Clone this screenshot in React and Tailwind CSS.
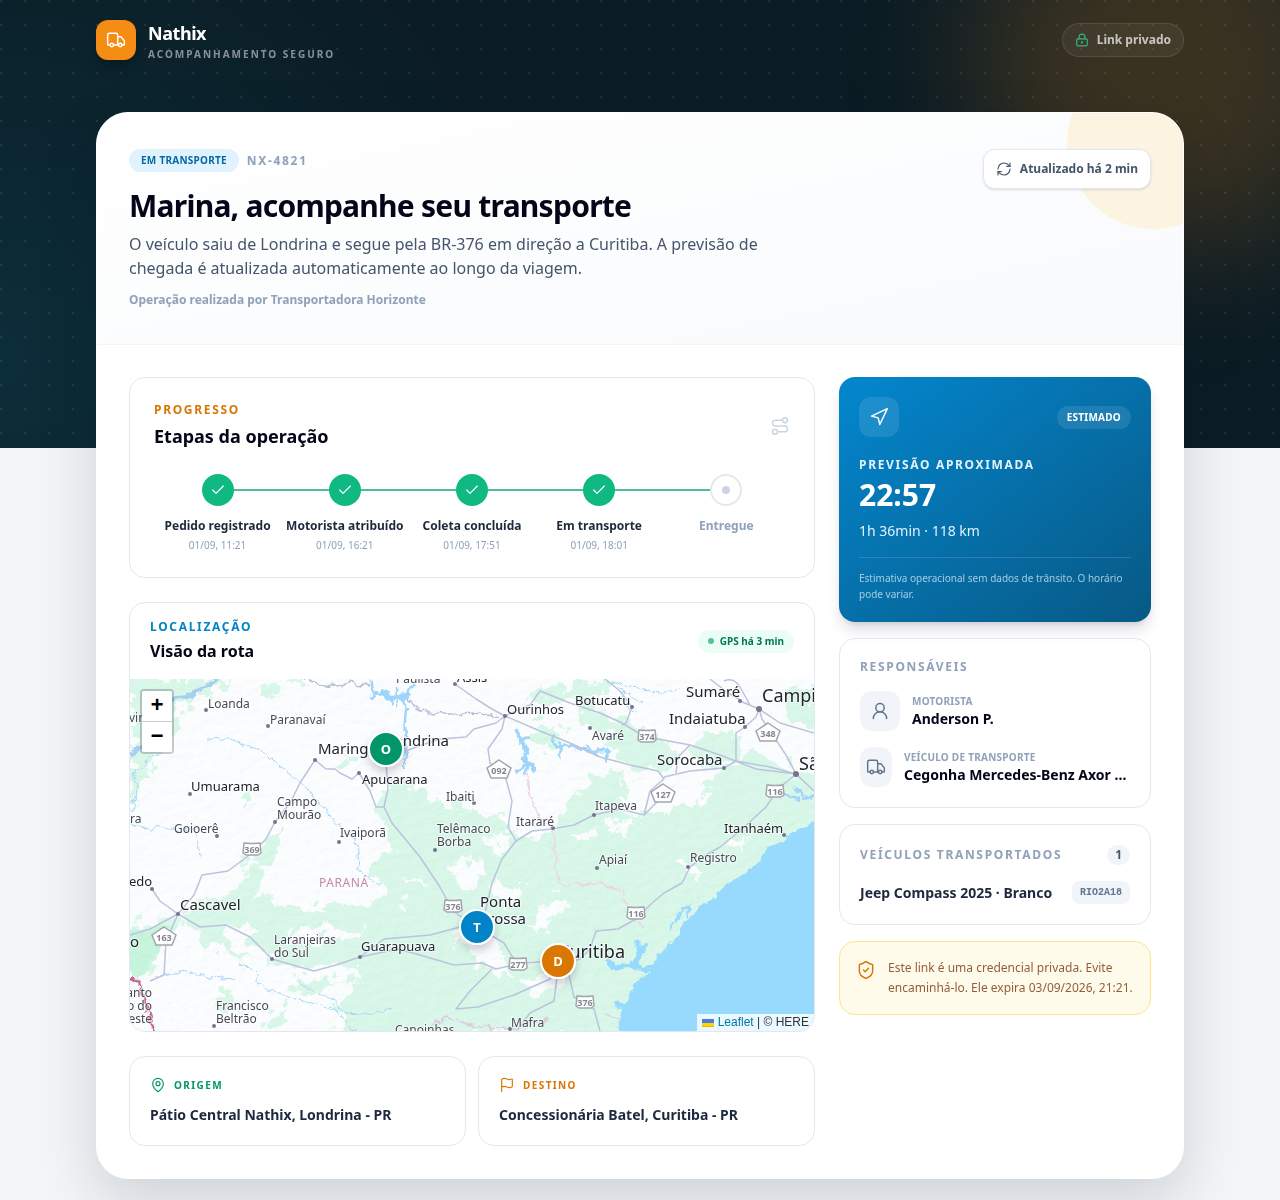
import { Check, Flag, LockKeyhole, MapPin, Navigation, RefreshCw, Route, ShieldCheck, Truck, UserRound } from 'lucide-react';

const steps = [
    { label: 'Pedido registrado', date: '01/09, 11:21', done: true },
    { label: 'Motorista atribuído', date: '01/09, 16:21', done: true },
    { label: 'Coleta concluída', date: '01/09, 17:51', done: true },
    { label: 'Em transporte', date: '01/09, 18:01', done: true },
    { label: 'Entregue', done: false },
];

// [x, baseline, font size, lines, anchor]
const cities = [
    [-1, 43, 12, ['vir']],
    [78, 29, 12, ['Loanda']],
    [140, 45, 12, ['Paranavaí']],
    [188, 75, 15, ['Maringá']],
    [319, 67, 15, ['Londrina'], 'end'],
    [232, 105, 13, ['Apucarana']],
    [61, 112, 13, ['Umuarama']],
    [147, 127, 12, ['Campo', 'Mourão']],
    [316, 122, 12, ['Ibaiti']],
    [0, 144, 12, ['ra']],
    [266, 4, 12, ['Paulista']],
    [327, 3, 13, ['Assis']],
    [44, 154, 12, ['Goioerê']],
    [210, 158, 12, ['Ivaiporã']],
    [307, 154, 12, ['Telêmaco', 'Borba']],
    [386, 147, 12, ['Itararé']],
    [377, 35, 13, ['Ourinhos']],
    [445, 26, 13, ['Botucatu']],
    [462, 61, 12, ['Avaré']],
    [556, 18, 15, ['Sumaré']],
    [539, 45, 15, ['Indaiatuba']],
    [632, 23, 18, ['Campinas']],
    [527, 86, 15, ['Sorocaba']],
    [669, 91, 18, ['São Paulo']],
    [465, 131, 12, ['Itapeva']],
    [594, 154, 13, ['Itanhaém']],
    [560, 183, 12, ['Registro']],
    [469, 185, 12, ['Apiaí']],
    [-1, 207, 13, ['edo']],
    [50, 231, 15, ['Cascavel']],
    [0, 268, 15, ['o']],
    [144, 265, 12, ['Laranjeiras', 'do Sul']],
    [231, 272, 13, ['Guarapuava']],
    [22, 318, 12, ['anto', 'o do', 'este'], 'end'],
    [86, 331, 12, ['Francisco', 'Beltrão']],
    [265, 355, 12, ['Canoinhas']],
    [381, 348, 12, ['Mafra']],
    [350, 228, 15, ['Ponta']],
    [396, 245, 15, ['Grossa'], 'end'],
    [495, 279, 18, ['Curitiba'], 'end'],
];

const dots = [
    [76, 31], [138, 47], [185, 81], [229, 94], [60, 115], [145, 143], [344, 124], [325, 5], [87, 157], [209, 163],
    [305, 171], [423, 149], [375, 37], [502, 28], [460, 49], [610, 22], [615, 48], [594, 89], [464, 136], [654, 156],
    [558, 188], [467, 189], [22, 210], [48, 235], [142, 280], [230, 278], [84, 347], [380, 350], [629, 30, 3], [666, 95, 3],
];

const shields = [[517, 57, '374'], [645, 112, '116'], [323, 227, '376'], [388, 285, '277'], [455, 323, '376'], [506, 234, '116'], [122, 170, '369']];
const stateShields = [[638, 54, '348'], [369, 91, '092'], [533, 115, '127'], [34, 258, '163']];

const pins = [
    { x: 256, y: 70, letter: 'O', color: '#059669' },
    { x: 347, y: 248, letter: 'T', color: '#0284c7' },
    { x: 428, y: 282, letter: 'D', color: '#d97706' },
];

const greens = [
    '0,0 108,0 84,12 60,22 44,36 50,52 36,66 24,84 12,104 0,130',
    '0,250 20,246 46,236 52,246 38,262 26,280 18,296 0,300',
    // southern plateau and the coast range
    '262,104 280,97 292,112 306,127 333,124 350,134 372,136 384,152 400,160 420,152 436,128 450,110 466,98 496,94 500,110 486,122 500,134 530,136 556,124 574,104 600,88 622,72 650,84 690,104 690,356 204,356 222,338 198,322 168,312 140,298 112,282 84,268 60,252 54,240 70,222 92,218 112,206 118,196 112,180 128,186 138,200 126,214 150,226 178,232 200,222 232,226 262,218 246,200 240,184 262,172 256,150 246,132 250,116',
    '128,168 146,152 152,164 146,180 134,196 124,190',
    '400,14 440,8 462,0 480,4 470,18 436,22 410,26',
    '488,36 516,48 540,66 546,82 530,96 506,92 490,76 480,60',
    '398,50 420,44 432,56 424,72 402,66',
    '446,20 470,28 484,46 496,62 470,56 452,44',
    '560,70 592,50 616,62 600,82 572,90',
    '648,14 684,6 690,44 664,46',
    '108,118 124,114 124,128 112,132',
    '132,8 142,6 146,16 138,18',
    '208,82 220,74 222,88 212,92',
    '84,316 108,312 104,334 90,328', '140,330 156,326 158,344 142,352 134,344',
    '148,0 176,0 172,5 160,5',
];

const clearings = [
    '130,190 160,178 190,176 232,184 246,206 236,218 206,214 184,224 160,216 142,214',
    '92,250 118,246 124,262 112,272 96,264', '160,256 196,246 232,252 230,262 200,258 176,266',
    '104,268 130,266 142,284 168,290 202,288 226,286 236,294 214,302 180,300 150,304 128,292',
    '184,316 206,302 226,304 222,318 200,324 188,326',
    '320,186 340,180 352,196 346,208 330,206', '372,204 394,206 390,222 376,224 362,218',
    '408,232 420,218 434,214 436,226 420,240 412,256 404,250',
    '322,250 342,244 362,260 378,286 386,292 366,296 346,278 330,266',
    '396,306 426,290 440,292 430,306 402,316', '476,146 500,138 512,144 492,154', '440,156 456,150 470,158 450,164',
    '356,150 376,148 384,170 372,176 360,164', '546,178 556,180 566,200 556,196', '600,158 620,156 612,170 602,168',
    '268,220 280,222 276,234 266,230', '270,196 290,200 280,206', '560,110 580,116 570,128 556,124',
];

const roads = [
    'M190 -1 L235 -1 M325 5 L346 20 L362 30 L375 37 L400 26 L410 12 L440 24 L470 34 L492 44 L510 55 L528 60 L560 66 L590 76 L626 90 L666 95',
    'M502 28 L496 44 L492 46 M475 0 L490 12 L502 28',
    'M375 37 L410 52 L440 64 L470 78 L500 86 L528 92 L534 100 L520 112 L514 136 M534 98 L560 92 L594 89 L606 82 L640 88 L666 95',
    'M560 66 L548 78 L546 94 M606 82 L606 54 L615 48 L626 38 L629 30 L632 40 L644 58 L656 76 L666 95 L684 112',
    'M610 22 L629 30 L650 44 L684 54 M580 0 L598 14 L612 22 M594 2 Q604 -2 610 8 L620 26',
    'M666 95 L648 110 L636 128 L610 152 L590 168 L576 176 L560 188 L552 204 L534 214 L520 226 L506 240 L488 250 L466 252 L460 270 L450 280 L436 284',
    'M375 37 L366 44 L344 50 L336 58 L310 60 L286 68 L256 80 M375 37 L372 50 L358 70 L360 84 L376 100 L382 122 L378 148 L386 162 L372 180 L362 204 L356 230 L348 246',
    'M386 162 L402 152 L422 150 L444 146 L464 136 L490 130 L514 136 L530 120',
    'M229 94 L222 100 L210 94 L205 90 L196 90 L185 81 L170 104 L160 124 L145 143 L136 160 L122 174 L98 192 L72 196 L64 216 L48 235',
    'M22 210 L30 222 L48 235 L70 248 L96 246 L120 258 L142 280 L184 292 L206 286 L230 278 L254 260 L300 256 L330 248 L347 248',
    'M48 235 L20 250 L0 256 M48 235 L36 262 L34 296 L20 302',
    'M229 94 L240 112 L246 128 L254 128 L258 110 L256 84 M254 128 L262 144 L290 178 L310 208 L323 232 L340 244',
    'M230 278 L268 270 L290 276 L324 286 L352 284 L366 290 L392 284 L428 282 M347 248 L374 264 L386 284',
    'M428 282 L420 300 L384 316 L348 328 L326 330 L340 312 L362 290 M428 290 L424 322 L400 334 L388 350 M438 292 L444 318 L464 330 L470 352',
];

const rivers = [
    'M0 142 L12 150 L34 148 L50 152 L66 148 L70 178 M76 61 L100 60 L132 72 L150 88 L172 104 L204 142 L226 160 L228 192 L250 206',
    'M0 134 L8 110 L4 92 L40 66 M26 298 L50 292 L80 298 L104 300 M228 356 L210 334 L190 326 L164 320 L144 312 L128 304 L124 292 L110 284',
    'M168 304 L200 320 L216 334 L240 336 L262 328 M478 0 L500 8 L530 14 L550 10 M486 8 L510 22 M492 18 L506 36',
];

const Eyebrow = ({ className, children }) => <p className={`text-xs font-bold uppercase tracking-[0.14em] ${className}`}>{children}</p>;

const RouteMap = () => (
    <svg viewBox="0 0 684 352" preserveAspectRatio="xMidYMid slice" className="block h-full w-full" role="img" aria-label="Mapa da rota">
        <defs>
            <filter id="ragged" x="-5%" y="-5%" width="110%" height="110%">
                <feTurbulence type="fractalNoise" baseFrequency="0.07" numOctaves="4" seed="4" result="n" />
                <feDisplacementMap in="SourceGraphic" in2="n" scale="30" xChannelSelector="R" yChannelSelector="G" />
            </filter>
            <filter id="wiggle" x="-5%" y="-5%" width="110%" height="110%">
                <feTurbulence type="fractalNoise" baseFrequency="0.12" numOctaves="3" seed="9" result="n" />
                <feDisplacementMap in="SourceGraphic" in2="n" scale="9" xChannelSelector="R" yChannelSelector="G" />
            </filter>
            <filter id="relief" x="0" y="0" width="100%" height="100%">
                <feTurbulence type="fractalNoise" baseFrequency="0.09 0.14" numOctaves="4" seed="12" result="n" />
                <feDiffuseLighting in="n" surfaceScale="2" lightingColor="#ffffff">
                    <feDistantLight azimuth="225" elevation="60" />
                </feDiffuseLighting>
            </filter>
            <filter id="pinShadow" x="-50%" y="-50%" width="200%" height="200%">
                <feDropShadow dx="0" dy="5" stdDeviation="5" floodColor="#0f172a" floodOpacity="0.2" />
            </filter>
        </defs>
        <rect width="684" height="352" fill="#fcfdff" />
        <g filter="url(#ragged)">
            <g fill="#daf8ea">{greens.map((p) => <polygon key={p} points={p} />)}</g>
            <g fill="#fcfdff">{clearings.map((p) => <polygon key={p} points={p} />)}</g>
        </g>
        <polygon points="0,252 40,246 30,270 16,294 0,298" fill="#c8f5de" filter="url(#wiggle)" />
        <rect width="684" height="352" filter="url(#relief)" opacity="0.09" className="mix-blend-multiply" />
        <g filter="url(#wiggle)" fill="none" strokeLinejoin="round">
            <g stroke="#a3d5f8" strokeWidth="1">{rivers.map((d) => <path key={d} d={d} />)}</g>
            <path d="M0 76 L24 60 M38 22 L62 16 L78 6 L90 -2" stroke="#a6cff2" strokeWidth="4" />
            <path d="M174 0 L200 8 L222 4 L240 8 M240 0 L244 14 L262 20 L276 18 L290 32 L320 36 L344 34 L370 38" stroke="#b9bdd6" strokeWidth="1.5" />
            <path d="M240 2 L244 12 L242 20 M244 12 L258 18 L262 26 M258 18 L272 18 L284 6 M272 18 L276 30 L274 56 M266 8 L268 28 M276 56 L274 90" stroke="#9fd5fa" strokeWidth="2.5" />
            <path d="M250 10 L258 18 L272 20 L280 12" stroke="#9fd5fa" strokeWidth="5" />
            <path d="M386 52 L394 66 L398 80 L396 96 M388 62 L400 60 M392 78 L404 90 M396 84 L386 94" stroke="#9fd5fa" strokeWidth="4" />
            <path d="M422 54 L426 68 L440 66 L456 72 L478 72 L476 84 M430 62 L428 78 M456 66 L468 78" stroke="#9fd5fa" strokeWidth="3" />
            <path d="M664 108 L672 118 L688 116 M640 110 L668 120" stroke="#9fd5fa" strokeWidth="2.5" />
            <path d="M0 300 L10 304 L14 318 L18 334 L24 354" stroke="#c8688c" strokeWidth="2.5" />
            <path d="M398 96 L400 120 L410 140 L424 150 L426 190 L432 206 L470 204 L494 212 L498 236 L514 250 M400 120 L396 100" stroke="#efd3df" strokeWidth="1.5" />
            <path d="M300 346 L316 338 L340 346 L380 350 L420 340 M474 336 L490 338" stroke="#dccbdd" strokeWidth="1.5" />
        </g>
        <g fill="none" stroke="#bcc3dd" strokeWidth="1.5" strokeLinejoin="round">{roads.map((d) => <path key={d} d={d} />)}</g>
        <g filter="url(#wiggle)">
            <path d="M692 138 L658 157 L636 170 L630 184 L612 196 L597 206 L572 226 L556 242 L548 256 L534 272 L524 282 L520 294 L504 306 L494 324 L489 340 L488 362 L700 362 Z" fill="#97dafd" />
            <path d="M512 290 L502 286 L484 288 L478 280 M504 286 L510 272 L506 262 M510 276 L518 264 M512 292 L524 288 M486 326 L500 327" fill="none" stroke="#97dafd" strokeWidth="5" />
            <path d="M546 244 L552 230 L560 226 L556 240 M540 250 L548 234" fill="none" stroke="#97dafd" strokeWidth="2" />
        </g>
        <g fill="#77748f">{dots.map(([x, y, r = 2]) => <circle key={`${x}-${y}`} cx={x} cy={y} r={r} />)}</g>
        <g fill="#ffffff" stroke="#a3a5ad" strokeWidth="1.5">
            {shields.map(([x, y]) => <path key={`${x}-${y}`} d={`M${x - 8} ${y - 6} Q${x} ${y - 5} ${x + 8} ${y - 6} L${x + 9} ${y + 4} L${x + 6} ${y + 6} H${x - 6} L${x - 9} ${y + 4} Z`} />)}
            {stateShields.map(([x, y]) => <path key={`${x}-${y}`} d={`M${x} ${y - 10} L${x + 12} ${y - 2} L${x + 8} ${y + 8} H${x - 8} L${x - 12} ${y - 2} Z`} />)}
        </g>
        <g fontSize="9" fontWeight="700" fill="#85878f" textAnchor="middle">
            {[...shields, ...stateShields].map(([x, y, n]) => <text key={`${x}-${y}`} x={x} y={y + 4}>{n}</text>)}
        </g>
        <g stroke="#ffffff" strokeOpacity="0.6" strokeWidth="2" paintOrder="stroke">
            {cities.map(([x, y, size, lines, anchor = 'start']) => (
                <text key={lines[0]} fontSize={size} textAnchor={anchor} fill={size > 12 ? '#22232b' : '#484955'}>
                    {lines.map((line, i) => <tspan key={line} x={x} y={y + i * 13}>{line}</tspan>)}
                </text>
            ))}
        </g>
        <text x="189" y="208" fontSize="12" fill="#c58aa6" className="tracking-wider">PARANÁ</text>
        {pins.map((pin) => (
            <g key={pin.letter}>
                <circle cx={pin.x} cy={pin.y} r="17" fill={pin.color} stroke="#ffffff" strokeWidth="2" filter="url(#pinShadow)" />
                <text x={pin.x} y={pin.y + 5} fontSize="13" fontWeight="700" fill="#ffffff" textAnchor="middle">{pin.letter}</text>
            </g>
        ))}
    </svg>
);

export default function App() {
    return (
        <div className="relative min-h-screen overflow-hidden bg-[#f3f6f8] pb-5 font-['Noto_Sans',sans-serif] text-slate-950">
            <div className="absolute inset-x-0 top-0 h-112 overflow-hidden bg-[#0b1c24]">
                <div className="absolute inset-0 bg-[radial-gradient(circle_at_0%_80%,rgba(14,116,144,0.2),transparent_40%)]" />
                <div className="absolute -right-20 -top-32 size-96 rounded-full bg-[#f58d15]/20 blur-3xl" />
                <div className="absolute inset-0 bg-[radial-gradient(circle_at_1px_1px,rgba(255,255,255,0.09)_1px,transparent_0)] bg-[size:24px_24px]" />
            </div>

            <div className="relative mx-auto max-w-6xl px-8">
                <header className="flex h-20 items-center justify-between">
                    <div className="flex items-center gap-3">
                        <div className="flex size-10 items-center justify-center rounded-xl bg-[#f58d15] text-white shadow-lg shadow-black/20">
                            <Truck size={20} strokeWidth={1.75} />
                        </div>
                        <div>
                            <p className="text-lg font-bold tracking-tight text-white">Nathix</p>
                            <p className="text-[10px] leading-[15px] font-bold uppercase tracking-[0.2em] text-white/50">Acompanhamento seguro</p>
                        </div>
                    </div>
                    <div className="flex items-center gap-2 rounded-full border border-white/10 bg-white/5 px-3 py-2 text-xs font-bold text-white/70">
                        <LockKeyhole size={14} className="text-[#34b57f]" />
                        Link privado
                    </div>
                </header>

                <main className="mt-8 overflow-hidden rounded-[32px] border border-white bg-white shadow-[0_24px_60px_rgba(15,23,42,0.16)]">
                    <section className="relative overflow-hidden border-b border-slate-100 bg-linear-to-br from-white to-slate-50 px-8 py-9">
                        <div className="absolute -right-14 -top-14 size-43 rounded-full bg-[#fdf3e1]" />
                        <div className="relative flex items-start justify-between gap-6">
                            <div>
                                <div className="flex items-center gap-2">
                                    <span className="rounded-full bg-[#e0f2fe] px-3 py-1 text-[10px] leading-[15px] font-bold uppercase tracking-wide text-[#0369a1]">Em transporte</span>
                                    <span className="text-xs font-bold tracking-[0.14em] text-slate-400">NX-4821</span>
                                </div>
                                <h1 className="mt-4 text-3xl font-bold tracking-tight">Marina, acompanhe seu transporte</h1>
                                <p className="mt-2 max-w-2xl text-base text-slate-600">O veículo saiu de Londrina e segue pela BR-376 em direção a Curitiba. A previsão de chegada é atualizada automaticamente ao longo da viagem.</p>
                                <p className="mt-3 text-xs font-bold text-slate-400">Operação realizada por Transportadora Horizonte</p>
                            </div>
                            <button type="button" className="flex h-10 shrink-0 items-center gap-2 rounded-xl border border-slate-200 bg-white px-3 text-xs font-bold text-slate-600 shadow-sm">
                                <RefreshCw size={16} strokeWidth={1.75} />
                                Atualizado há 2 min
                            </button>
                        </div>
                    </section>

                    <div className="grid grid-cols-[minmax(0,1fr)_312px] items-start gap-6 p-8">
                        <div className="space-y-6">
                            <section className="rounded-2xl border border-slate-200 bg-white p-6">
                                <div className="flex items-center justify-between">
                                    <div>
                                        <Eyebrow className="text-[#d97706]">Progresso</Eyebrow>
                                        <h2 className="mt-1 text-lg font-bold">Etapas da operação</h2>
                                    </div>
                                    <Route size={20} strokeWidth={1.75} className="text-slate-300" />
                                </div>
                                <ol className="mt-6 grid grid-cols-5">
                                    {steps.map((step, i) => (
                                        <li key={step.label} className="flex flex-col items-center text-center">
                                            <div className="flex w-full items-center">
                                                <span className={`h-0.5 flex-1 ${i > 0 ? 'bg-[#56b99c]' : ''}`} />
                                                <span className={`flex size-8 items-center justify-center rounded-full ${step.done ? 'bg-[#10b981] text-white' : 'border-2 border-slate-200 bg-white'}`}>
                                                    {step.done ? <Check size={16} strokeWidth={1.75} /> : <span className="size-2 rounded-full bg-slate-300" />}
                                                </span>
                                                <span className={`h-0.5 flex-1 ${i < steps.length - 1 ? 'bg-[#56b99c]' : ''}`} />
                                            </div>
                                            <p className={`mt-3 whitespace-nowrap text-xs font-bold ${step.done ? 'text-slate-800' : 'text-slate-400'}`}>{step.label}</p>
                                            {step.date && <p className="mt-1 text-[10px] leading-[15px] text-slate-400">{step.date}</p>}
                                        </li>
                                    ))}
                                </ol>
                            </section>

                            <section className="overflow-hidden rounded-2xl border border-slate-200 bg-white">
                                <div className="flex items-center justify-between px-5 py-4">
                                    <div>
                                        <Eyebrow className="text-[#0284c7]">Localização</Eyebrow>
                                        <h2 className="mt-1 text-base font-bold">Visão da rota</h2>
                                    </div>
                                    <span className="flex items-center gap-1.5 rounded-full bg-emerald-50 px-2.5 py-1 text-[10px] leading-[15px] font-bold text-[#047857]">
                                        <span className="size-1.5 rounded-full bg-[#4cc79a]" />
                                        GPS há 3 min
                                    </span>
                                </div>
                                <div className="relative h-88">
                                    <RouteMap />
                                    <div className="absolute left-2.5 top-2.5 flex flex-col overflow-hidden rounded border-2 border-black/20 bg-clip-padding font-['Liberation_Mono',monospace] text-[22px] font-bold text-black">
                                        <button type="button" aria-label="Aproximar" className="flex h-[31px] w-[30px] items-center justify-center border-b border-[#cccccc] bg-white">+</button>
                                        <button type="button" aria-label="Afastar" className="flex size-[30px] items-center justify-center bg-white">−</button>
                                    </div>
                                    <div className="absolute bottom-0 right-0 flex items-center bg-white/80 px-[5px] font-['Liberation_Sans',sans-serif] text-xs leading-[17px] text-[#333333]">
                                        <svg width="12" height="8" viewBox="0 0 12 8" className="mr-1" aria-hidden="true"><path fill="#4C7BE1" d="M0 0h12v4H0z" /><path fill="#FFD500" d="M0 4h12v3H0z" /><path fill="#E0BC00" d="M0 7h12v1H0z" /></svg>
                                        <a href="#leaflet" className="text-[#0078a8]">Leaflet</a>
                                        <span className="whitespace-pre"> | © HERE</span>
                                    </div>
                                </div>
                            </section>

                            <div className="grid grid-cols-2 gap-3">
                                <section className="rounded-2xl border border-slate-200 p-5">
                                    <p className="flex items-center gap-2 text-[10px] leading-4 font-bold uppercase tracking-[0.14em] text-[#059669]"><MapPin size={16} strokeWidth={1.75} />Origem</p>
                                    <p className="mt-3 text-sm font-bold text-slate-800">Pátio Central Nathix, Londrina - PR</p>
                                </section>
                                <section className="rounded-2xl border border-slate-200 p-5">
                                    <p className="flex items-center gap-2 text-[10px] leading-4 font-bold uppercase tracking-[0.14em] text-[#d97706]"><Flag size={16} strokeWidth={1.75} />Destino</p>
                                    <p className="mt-3 text-sm font-bold text-slate-800">Concessionária Batel, Curitiba - PR</p>
                                </section>
                            </div>
                        </div>

                        <aside className="space-y-4">
                            <section className="rounded-2xl bg-linear-to-br from-[#0387cf] to-[#075985] p-5 text-white shadow-lg shadow-slate-900/15">
                                <div className="flex items-center justify-between">
                                    <span className="flex size-10 items-center justify-center rounded-xl bg-white/10"><Navigation size={20} strokeWidth={1.75} /></span>
                                    <span className="rounded-full bg-white/10 px-2.5 py-1 text-[10px] leading-[15px] font-bold uppercase tracking-wide">Estimado</span>
                                </div>
                                <Eyebrow className="mt-5 text-sky-100">Previsão aproximada</Eyebrow>
                                <p className="mt-1 text-3xl font-bold">22:57</p>
                                <p className="mt-2 text-sm text-sky-100">1h 36min · 118 km</p>
                                <p className="mt-4 border-t border-white/15 pt-3 text-[10px] leading-4 text-sky-100/70">Estimativa operacional sem dados de trânsito. O horário pode variar.</p>
                            </section>

                            <section className="rounded-2xl border border-slate-200 p-5">
                                <Eyebrow className="text-slate-400">Responsáveis</Eyebrow>
                                <div className="mt-4 flex items-center gap-3">
                                    <span className="flex size-10 shrink-0 items-center justify-center rounded-xl bg-slate-100 text-slate-500"><UserRound size={20} strokeWidth={1.75} /></span>
                                    <div>
                                        <p className="text-[10px] leading-[15px] font-bold uppercase tracking-wide text-slate-400">Motorista</p>
                                        <p className="text-sm font-bold">Anderson P.</p>
                                    </div>
                                </div>
                                <div className="mt-4 flex items-center gap-3">
                                    <span className="flex h-10 w-8 shrink-0 items-center justify-center rounded-xl bg-slate-100 text-slate-500"><Truck size={20} strokeWidth={1.75} /></span>
                                    <div className="min-w-0">
                                        <p className="text-[10px] leading-[15px] font-bold uppercase tracking-wide text-slate-400">Veículo de transporte</p>
                                        <p className="truncate text-sm font-bold">Cegonha Mercedes-Benz Axor …</p>
                                    </div>
                                </div>
                            </section>

                            <section className="rounded-2xl border border-slate-200 p-5">
                                <div className="flex items-center justify-between">
                                    <Eyebrow className="text-slate-400">Veículos transportados</Eyebrow>
                                    <span className="rounded-full bg-slate-100 px-2 py-0.5 text-xs font-bold text-slate-600">1</span>
                                </div>
                                <div className="mt-4 flex items-center justify-between">
                                    <p className="text-sm font-bold text-slate-800">Jeep Compass 2025 · Branco</p>
                                    <span className="rounded-lg bg-slate-100 px-2 py-1 font-['Liberation_Mono',monospace] text-[10px] leading-[15px] font-bold text-slate-500">RIO2A18</span>
                                </div>
                            </section>

                            <section className="flex gap-3 rounded-2xl border border-[#fde68a] bg-[#fffbeb] p-4">
                                <ShieldCheck size={20} strokeWidth={1.75} className="mt-0.5 shrink-0 text-[#d97706]" />
                                <p className="text-xs leading-5 text-[#78350f]/80">Este link é uma credencial privada. Evite encaminhá-lo. Ele expira 03/09/2026, 21:21.</p>
                            </section>
                        </aside>
                    </div>
                </main>
            </div>
        </div>
    );
}
